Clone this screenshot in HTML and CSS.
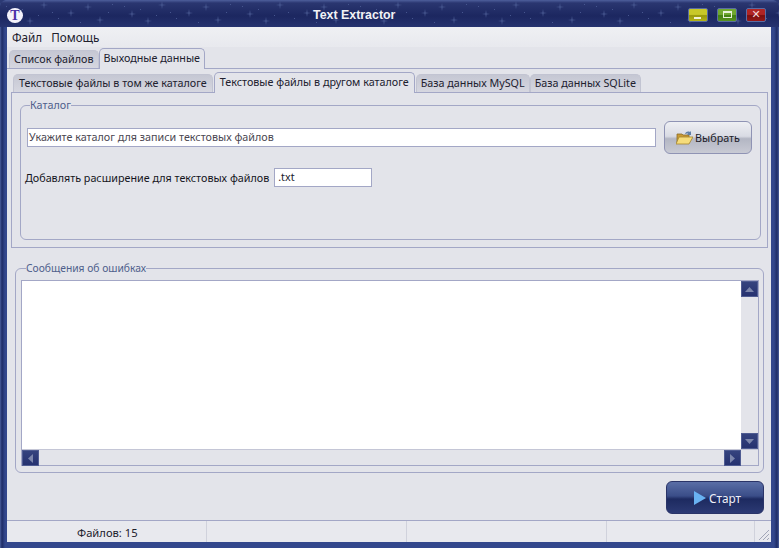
FILE: index.html
```html
<!DOCTYPE html>
<html lang="ru">
<head>
<meta charset="utf-8">
<title>Text Extractor</title>
<link rel="stylesheet" href="styles.css">
</head>
<body>
<div class="window">
  <header class="titlebar">
    <svg class="stars" width="100%" height="27" aria-hidden="true">
      <defs>
        <g id="st"><path d="M0-4 .6-.6 4 0 .6.6 0 4-.6.6-4 0-.6-.6Z"/></g>
        <pattern id="sky" width="118" height="27" patternUnits="userSpaceOnUse">
          <g fill="#46568f">
            <use href="#st" x="14" y="14"/><use href="#st" x="44" y="5"/><use href="#st" x="71" y="13"/><use href="#st" x="100" y="20"/>
            <use href="#st" x="30" y="21"/><use href="#st" x="88" y="7"/>
            <rect x="22" y="9" width="1" height="1"/><rect x="58" y="18" width="1" height="1"/><rect x="80" y="22" width="1" height="1"/><rect x="108" y="12" width="1" height="1"/>
            <rect x="6" y="6" width="1" height="1"/><rect x="52" y="12" width="1" height="1"/><rect x="38" y="15" width="1" height="1"/><rect x="112" y="4" width="1" height="1"/>
          </g>
        </pattern>
      </defs>
      <rect width="100%" height="27" fill="url(#sky)"/>
    </svg>
    <span class="logo">T</span>
    <h1 class="title">Text Extractor</h1>
    <div class="caption-btns">
      <button class="cap cap-min"><i class="g-min"></i></button>
      <button class="cap cap-max"><i class="g-max"></i></button>
      <button class="cap cap-close">✕</button>
    </div>
  </header>
  <div class="client">
    <nav class="menu"><span>Файл</span><span>Помощь</span></nav>
    <div class="tabs outer-tabs">
      <span class="tab">Список файлов</span>
      <span class="tab active">Выходные данные</span>
    </div>
    <section class="outer-panel">
      <div class="tabs inner-tabs">
        <span class="tab">Текстовые файлы в том же каталоге</span>
        <span class="tab active">Текстовые файлы в другом каталоге</span>
        <span class="tab tab-db">База данных MySQL</span>
        <span class="tab tab-db">База данных SQLite</span>
      </div>
      <div class="inner-panel">
        <fieldset class="group catalog">
          <legend>Каталог</legend>
          <div class="dir-row">
            <div class="field dir-field">Укажите каталог для записи текстовых файлов</div>
            <button class="choose">
              <svg width="17" height="15" viewBox="0 0 17 15">
                <path d="M1 4h5l1 1h6v8H1Z" fill="#c99a34" stroke="#8a6d2a" stroke-width=".8"/>
                <path d="M0 14 3 7h14l-4 7Z" fill="#f6dc7a" stroke="#a4842f" stroke-width=".8"/>
                <path d="M9 4c1-2.500 3-3 5-2l1-1v4h-4l1.200-1.200c-1-.6-2-.4-3 .2Z" fill="#5f7fa8"/>
              </svg>
              <span>Выбрать</span>
            </button>
          </div>
          <div class="ext-row">
            <span>Добавлять расширение для текстовых файлов</span>
            <div class="field ext-field">.txt</div>
          </div>
        </fieldset>
      </div>
    </section>
    <fieldset class="group errors">
      <legend>Сообщения об ошибках</legend>
      <div class="log">
        <div class="log-top">
          <div class="log-text"></div>
          <div class="vscroll">
            <div class="sbtn"><svg width="9" height="5" viewBox="0 0 9 5"><path d="M4.500 0 9 5H0Z"/></svg></div>
            <div class="sbtn"><svg width="9" height="5" viewBox="0 0 9 5"><path d="M4.500 5 9 0H0Z"/></svg></div>
          </div>
        </div>
        <div class="hscroll">
          <div class="sbtn"><svg width="5" height="9" viewBox="0 0 5 9"><path d="M0 4.500 5 0V9Z"/></svg></div>
          <div class="sbtn"><svg width="5" height="9" viewBox="0 0 5 9"><path d="M5 4.500 0 0V9Z"/></svg></div>
        </div>
      </div>
    </fieldset>
    <div class="actions">
      <button class="start">
        <svg width="12" height="14" viewBox="0 0 12 14"><path d="M0 0 12 7 0 14Z" fill="#69b2f2"/></svg>
        <span>Старт</span>
      </button>
    </div>
    <footer class="status">
      <span class="s1">Файлов: 15</span><span class="s2"></span><span class="s3"></span><span class="s4"></span>
      <svg class="grip" width="12" height="12" viewBox="0 0 12 12"><path d="M11 1 1 11M11 5 5 11M11 9 9 11" stroke="#a2a6b8" fill="none"/></svg>
    </footer>
  </div>
</div>
</body>
</html>
```
FILE: styles.css
```css
* { box-sizing: border-box; }
html, body { margin: 0; padding: 0; background: #2c3a74; }
body { font: 10.750px "Noto Sans", sans-serif; color: #1a1a24; }
button { font: inherit; padding: 0; margin: 0; }
fieldset { margin: 0; }

.window {
  width: 779px; height: 548px; overflow: hidden;
  display: flex; flex-direction: column;
  padding: 0 8px 6px 7px;
  background: linear-gradient(90deg, #4a5e9c 0, #1e2c66 2px, #33478c 5px, #33478c calc(100% - 5px), #1e2c66 calc(100% - 2px), #4a5e9c 100%);
  border-radius: 6px 6px 0 0;
}
.titlebar {
  position: relative; height: 27px; flex: none;
  margin: 0 -8px 0 -7px; padding: 0 7px;
  display: flex; align-items: center;
  background: linear-gradient(#4e5f9c 0, #2a3670 3px, #1c2760 16px, #26336f 27px);
  border-radius: 6px 6px 0 0;
}
.stars { position: absolute; left: 0; top: 0; }
.logo {
  position: relative; width: 16px; height: 15px; margin-top: 4px;
  border-radius: 50%; background: #f4f2fb; color: #4a2fa8;
  font: bold 14px/15px "Liberation Serif", serif; text-align: center;
}
.title {
  position: relative; margin: 3px 0 0 290px;
  font: bold 12.400px/15px "Liberation Sans", sans-serif; color: #f2f2f6;
}
.caption-btns { position: relative; margin-left: auto; display: flex; gap: 9px; padding-right: 6px; margin-top: 2px; }
.cap {
  width: 20px; height: 14px; border: 1px solid #5a6ca4; border-radius: 2px;
  display: flex; align-items: center; justify-content: center;
  color: #f4d8d8; font: 11px/12px "DejaVu Sans", sans-serif;
}
.cap-min { background: linear-gradient(#c8c828 0 45%, #98980c 55%, #b4b416); }
.cap-max { background: linear-gradient(#70a830 0 45%, #3f7e10 55%, #5a9420); }
.cap-close { background: linear-gradient(#b02424 0 45%, #7a0e0e 55%, #961818); }
.g-min { width: 7px; height: 2px; background: #f2f2d8; margin-top: 6px; margin-right: 1px; }
.g-max { width: 9px; height: 7px; border: 1px solid #e6f0d8; border-top-width: 2px; }

.client {
  flex: 1; min-height: 0;
  display: flex; flex-direction: column;
  background: #e3e4ea;
}
.menu {
  height: 20px; flex: none; display: flex; gap: 9px; padding: 3px 0 0 5px;
  font-size: 11.700px; line-height: 15px; color: #20202c;
  background: linear-gradient(#eff0f3, #e8e9ee);
}
.tabs { display: flex; align-items: flex-end; flex: none; position: relative; }
.tab {
  display: block; height: 18px; padding: 0 5px; line-height: 16px;
  margin-right: 1px;
  background: linear-gradient(#c5c7d3, #d6d7e0);
  border: 1px solid #c2c4d2; border-bottom: 0; border-radius: 5px 5px 0 0;
  white-space: nowrap; color: #20202e;
}
.tab.active {
  height: 21px; background: #e3e4ea; line-height: 18px;
  border-color: #a3a7c6; position: relative; top: 1px; z-index: 1;
  margin-right: 1px;
}
.tab-db { padding: 0 4px; margin-right: 0; }
.outer-tabs { height: 21px; padding-left: 2px; }
.outer-tabs .tab { padding: 0 4px; margin-right: 0; }
.outer-panel {
  flex: none; height: 180px;
  border-top: 1px solid #a3a7c6;
  padding: 3px 3px 0 4px;
  display: flex; flex-direction: column;
}
.inner-tabs { height: 20px; padding-left: 2px; }
.inner-panel {
  flex: 1; min-height: 0; margin: 0;
  border: 1px solid #a3a7c6;
  padding: 6px 6px 0 8px;
}
.group {
  border: 1px solid #a3a7c6; border-radius: 6px; padding: 0;
  min-width: 0;
}
.group legend {
  padding: 0; color: #4f5f8c; line-height: 13px;
}
.catalog { height: 141px; padding: 9px 7px 0 6px; }
.catalog legend { margin-left: 3px; }
.errors legend { margin-left: 5px; font-size: 10.300px; }
.dir-row { display: flex; align-items: flex-start; gap: 8px; height: 40px; }
.field {
  height: 19px; background: #fff; border: 1px solid #a3a7c6;
  line-height: 17px; padding: 0 1px; color: #4a4650;
}
.dir-field { width: 629px; margin-top: 7px; }
.choose {
  width: 88px; height: 33px; flex: none; display: flex; align-items: center; justify-content: center; gap: 2px;
  border: 1px solid #8f93b4; border-radius: 6px;
  background: linear-gradient(#eeeff3 0, #d9dbe4 46%, #b3b6c3 54%, #c8cad4 100%);
  color: #1c1c28;
}
.ext-row { display: flex; align-items: center; gap: 5px; margin-top: 7px; margin-left: -2px; color: #14141c; }
.ext-field { width: 98px; color: #20202c; padding-left: 3px; }

.errors {
  flex: none; height: 211px; margin: 14px 7px 0 8px;
  padding: 0 4px 0 5px;
  display: flex; flex-direction: column;
}
.log { height: 186px; margin-top: 5px; border: 1px solid #a3a7c6; display: flex; flex-direction: column; }
.log-top { flex: 1; min-height: 0; display: flex; }
.log-text { flex: 1; background: #fff; }
.vscroll { width: 17px; background: #e3e4ea; display: flex; flex-direction: column; justify-content: space-between; }
.hscroll { height: 16px; flex: none; background: #e3e4ea; display: flex; justify-content: space-between; padding-right: 17px; border-top: 1px solid #c4c6d6; }
.sbtn {
  width: 17px; height: 16px;
  background: linear-gradient(#35437e, #263270);
  border: 1px solid #4f5c92;
  display: flex; align-items: center; justify-content: center;
}
.sbtn svg { fill: #7c86ac; }
.actions { flex: none; display: flex; justify-content: flex-end; padding: 8px 7px 0 0; height: 47px; }
.start {
  width: 98px; height: 33px; display: flex; align-items: center; justify-content: center; gap: 3px;
  padding-left: 5px;
  border: 1px solid #2a3468; border-radius: 6px;
  background: linear-gradient(#5a6ea6 0, #3a4d88 45%, #1d2a60 55%, #2c3a74 100%);
  color: #eef0f8; font-size: 11.800px;
}
.status {
  flex: 1; min-height: 0; position: relative; display: flex; align-items: center;
  border-top: 1px solid #a3a7c6; background: #e8e9ee; color: #20202c;
  font-size: 11.200px;
}
.status span { height: 100%; line-height: 23px; border-right: 1px solid #d0d2dc; }
.s1 { width: 200px; padding-left: 70px; }
.s2 { width: 200px; }
.s3 { width: 200px; }
.s4 { flex: 1; margin-right: 16px; }
.grip { position: absolute; right: 1px; bottom: 1px; }
```
